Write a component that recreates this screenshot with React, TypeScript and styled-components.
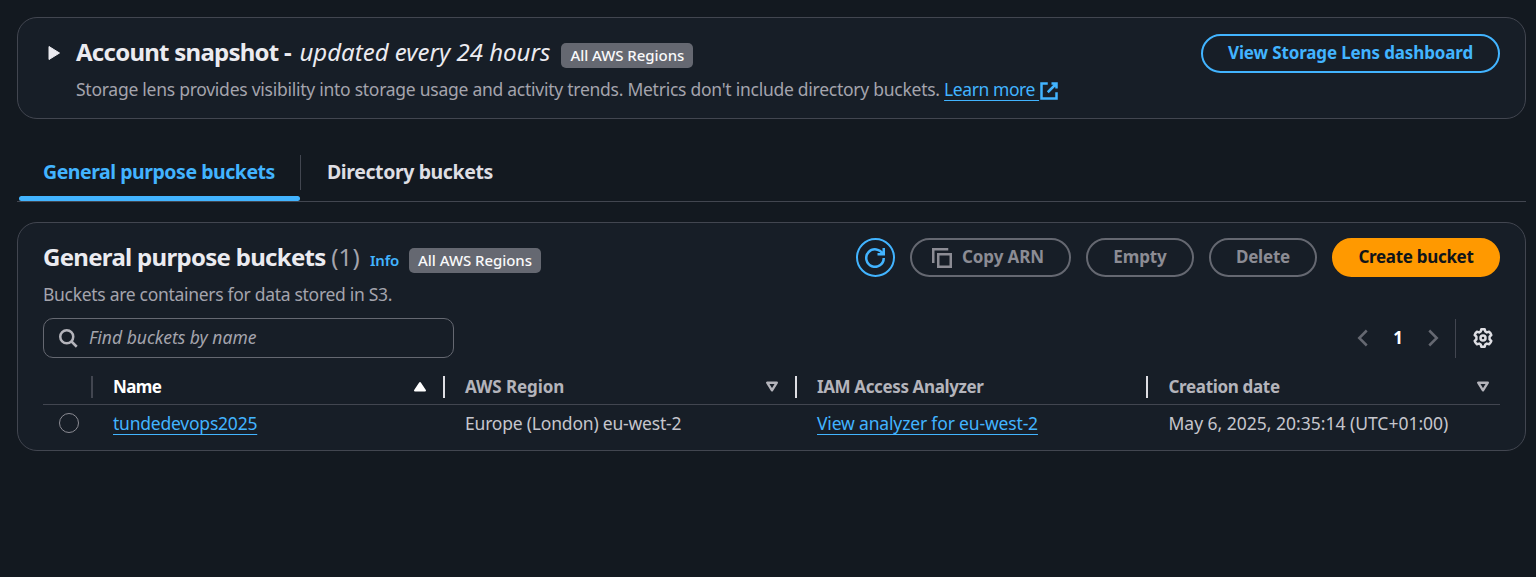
import React from 'react';
import styled, { createGlobalStyle, css } from 'styled-components';

const c = {
  page: '#131920',
  card: '#171e27',
  line: '#424650',
  muted: '#a4a4ad',
  text: '#c6c6cd',
  bright: '#ebebf0',
  blue: '#42b4ff',
  disabled: '#8c8c94',
  control: '#656871',
};

const GlobalStyle = createGlobalStyle`
  * { box-sizing: border-box; }
  body {
    margin: 0;
    background: ${c.page};
    color: ${c.text};
    font-family: "Noto Sans", "Open Sans", sans-serif;
    font-size: 17.5px;
    line-height: 25px;
  }
  h2, p { margin: 0; }
`;

const Page = styled.main`
  display: flex;
  flex-direction: column;
  min-height: 577px;
  padding: 17px 10px 0 17px;
`;

const Card = styled.section`
  border: 1px solid ${c.line};
  border-radius: 20px;
  background: ${c.card};
`;

const Snapshot = styled(Card)`
  display: flex;
  align-items: flex-start;
  height: 102px;
  padding: 16px 25px 0 29px;
`;

const Expander = styled.span`
  display: flex;
  width: 29px;
  padding-top: 11px;
`;

const SnapshotBody = styled.div`
  flex: 1;
  white-space: nowrap;
`;

const TitleRow = styled.div<{ $gap: number }>`
  display: flex;
  align-items: center;
  gap: ${p => p.$gap}px;
  height: 38px;
`;

const Heading = styled.h2<{ $track: number; $lift?: number }>`
  padding-bottom: ${p => p.$lift ?? 0}px;
  color: ${c.bright};
  font-size: 24px;
  font-weight: 700;
  line-height: 32px;
  letter-spacing: ${p => p.$track}px;
  white-space: pre;

  em {
    margin-left: 3px;
    font-weight: 400;
    letter-spacing: 0;
  }
`;

const Counter = styled.span`
  color: ${c.muted};
  font-weight: 400;
  letter-spacing: 0.2px;
`;

const Badge = styled.span<{ $top: number }>`
  height: 25px;
  margin-top: ${p => p.$top}px;
  padding: 0 9px;
  border-radius: 5px;
  background: ${c.control};
  color: #f9f9fa;
  font-size: 15px;
  font-weight: 500;
  line-height: 25px;
  letter-spacing: -0.05px;
  white-space: nowrap;
`;

const Description = styled.p<{ $top: number; $track: number }>`
  padding-top: ${p => p.$top}px;
  color: ${c.muted};
  letter-spacing: ${p => p.$track}px;
`;

const Link = styled.a<{ $track?: number }>`
  color: ${c.blue};
  letter-spacing: ${p => p.$track ?? 0}px;
  text-decoration: underline;
  text-decoration-thickness: 1px;
  text-underline-offset: 4px;
  text-decoration-skip-ink: none;
`;

const Button = styled.button<{ $tone: 'normal' | 'disabled' | 'primary'; $width: number; $track?: number }>`
  display: flex;
  align-items: center;
  justify-content: center;
  gap: 10px;
  width: ${p => p.$width}px;
  height: 39px;
  padding: 0 0 2px;
  border: 2px solid;
  border-radius: 20px;
  background: transparent;
  font: inherit;
  font-size: 17px;
  font-weight: 700;
  letter-spacing: ${p => p.$track ?? 0}px;
  white-space: nowrap;
  ${p => p.$tone === 'normal' && css`border-color: ${c.blue}; color: ${c.blue};`}
  ${p => p.$tone === 'disabled' && css`border-color: ${c.control}; color: ${c.disabled};`}
  ${p => p.$tone === 'primary' && css`border-color: #ff9900; background: #ff9900; color: #0f141a;`}
`;

const IconButton = styled(Button)`
  padding: 0 1px 0 0;
`;

const CopyButton = styled(Button)`
  padding-right: 5px;

  svg { margin-top: 2px; }
`;

const Tabs = styled.nav`
  display: flex;
  height: 47px;
  margin: 36px 0 20px;
  border-bottom: 1px solid ${c.line};
`;

const Tab = styled.a<{ $active?: boolean }>`
  display: flex;
  flex-direction: column;
  justify-content: space-between;
  color: ${p => (p.$active ? c.blue : '#dedee3')};
  font-size: 19.5px;
  font-weight: 700;
  letter-spacing: ${p => (p.$active ? -0.47 : -0.4)}px;
`;

const TabLabel = styled.span<{ $divided?: boolean }>`
  height: 35px;
  padding: 0 25px 0 26px;
  border-right: ${p => (p.$divided ? `1px solid ${c.line}` : '0')};
  line-height: 34px;
`;

const TabMarker = styled.span`
  height: 5px;
  margin: 0 1px 0 2px;
  border-radius: 3px;
  background: ${c.blue};
`;

const Buckets = styled(Card)`
  display: flex;
  flex-direction: column;
  height: 229px;
  padding: 15px 25px 0;
`;

const Header = styled.header`
  display: flex;
  justify-content: space-between;
  height: 80px;
`;

const Actions = styled.div`
  display: flex;
  gap: 15px;
  height: 39px;
`;

const Info = styled.a`
  margin-top: 7px;
  color: ${c.blue};
  font-size: 15px;
  font-weight: 600;
  letter-spacing: -0.2px;
`;

const Tools = styled.div`
  display: flex;
  align-items: center;
  justify-content: space-between;
`;

const Search = styled.label`
  display: flex;
  align-items: center;
  gap: 11px;
  width: 411px;
  height: 40px;
  padding-left: 14px;
  border: 1px solid ${c.control};
  border-radius: 10px;
  color: #b4b4bb;
`;

const Placeholder = styled.span`
  padding-bottom: 1px;
  color: ${c.muted};
  font-style: italic;
`;

const Pager = styled.div`
  display: flex;
  align-items: center;
  color: ${c.control};
`;

const PageNumber = styled.span`
  width: 50px;
  padding-bottom: 1px;
  color: #fff;
  font-size: 17px;
  font-weight: 700;
  text-align: center;
`;

const Preferences = styled.span`
  display: flex;
  align-items: center;
  height: 39px;
  margin-left: 12px;
  padding: 0 7px 0 17px;
  border-left: 1px solid ${c.line};
  color: #dedee3;
`;

const Row = styled.div`
  display: grid;
  grid-template-columns: 50px 352px 352px 351px 1fr;
  align-items: center;
  height: 37px;
`;

const HeadRow = styled(Row)`
  height: 29px;
  margin-top: 18px;
  padding-bottom: 6px;
  border-bottom: 1px solid ${c.line};
`;

const HeadCell = styled.div<{ $rule?: 'soft' | 'strong'; $active?: boolean; $track?: number }>`
  display: flex;
  align-items: center;
  justify-content: space-between;
  height: 22px;
  padding: 0 16px 0 20px;
  border-right: ${p => (p.$rule === 'strong' ? '2px solid #dedee3' : p.$rule === 'soft' ? `2px solid ${c.line}` : '0')};
  color: ${p => (p.$active ? '#fff' : '#b4b4bb')};
  font-size: 17px;
  font-weight: 700;
  line-height: 22px;
  letter-spacing: ${p => p.$track ?? 0}px;

  span { padding-bottom: 1px; }
`;

const LastHeadCell = styled(HeadCell)`
  padding: 0 10px 0 20.5px;
`;

const Cell = styled.div<{ $track?: number; $inset?: number }>`
  padding-left: ${p => p.$inset ?? 20}px;
  letter-spacing: ${p => p.$track ?? 0}px;
  white-space: nowrap;
`;

const Radio = styled.span`
  width: 20px;
  height: 20px;
  margin: 0 0 2px 16px;
  border: 1px solid #8c8c94;
  border-radius: 50%;
`;

const Glyph = styled.svg<{ $drop?: number; $weight?: number }>`
  flex: none;
  fill: none;
  stroke: currentColor;
  stroke-width: ${p => p.$weight ?? 2};
  vertical-align: ${p => p.$drop ?? 0}px;
`;

const ExternalIcon = () => (
  <Glyph width="20" height="20" viewBox="0 0 16 16" $drop={-5}>
    <path d="M10 2h4v4M7 9l7-7M14 9v5H2V2h5" />
  </Glyph>
);

const RefreshIcon = () => (
  <Glyph width="20" height="20" viewBox="0 0 16 16">
    <path d="M10 5h5V0M15 8a7 7 0 1 1-.7-3" />
  </Glyph>
);

const CopyIcon = () => (
  <Glyph width="20" height="20" viewBox="0 0 16 16">
    <path d="M15 5H5v10h10zM13 1H1v11" />
  </Glyph>
);

const SearchIcon = () => (
  <Glyph width="20" height="20" viewBox="0 0 16 16">
    <circle cx="7" cy="7" r="5.2" />
    <path d="m15 15-4.2-4.2" />
  </Glyph>
);

const ChevronIcon = ({ right }: { right?: boolean }) => (
  <Glyph width="20" height="20" viewBox="0 0 16 16">
    <path d={right ? 'm5 2 6 6-6 6' : 'm11 2-6 6 6 6'} />
  </Glyph>
);

const GearIcon = () => (
  <Glyph width="20" height="20" viewBox="0 0 20 20" strokeLinejoin="round" $weight={2.5}>
    <path d="M8.300 1.300h3.400l.6 2.200 1.500.9 2.300-.6q1.700 1.300 2.200 3.200l-1.700 1.600v2.800l1.700 1.600q-.5 1.900-2.200 3.200l-2.300-.6-1.500.9-.6 2.200H8.300l-.6-2.200-1.500-.9-2.300.6q-1.700-1.300-2.200-3.200l1.700-1.600V8.600L1.700 7q.5-1.900 2.200-3.200l2.300.6 1.500-.9z" />
    <circle cx="10" cy="10" r="2.500" />
  </Glyph>
);

const SortAscIcon = () => (
  <Glyph width="14" height="12" viewBox="0 0 14 12">
    <path d="M7 2 2 9.500h10z" fill="currentColor" strokeLinejoin="round" />
  </Glyph>
);

const SortIcon = () => (
  <Glyph width="14" height="12" viewBox="0 0 14 12" $weight={2.4}>
    <path d="M2.200 1.700h9.600L7 9.300z" strokeLinejoin="round" />
  </Glyph>
);

export default function App() {
  return (
    <>
      <GlobalStyle />
      <Page>
        <Snapshot>
          <Expander>
            <svg width="14" height="16" viewBox="0 0 14 16">
              <path d="M2 1.500v13L12.500 8z" fill={c.bright} stroke={c.bright} strokeLinejoin="round" />
            </svg>
          </Expander>
          <SnapshotBody>
            <TitleRow $gap={11}>
              <Heading $track={-0.75} $lift={2}>Account snapshot - <em>updated every 24 hours</em></Heading>
              <Badge $top={5}>All AWS Regions</Badge>
            </TitleRow>
            <Description $top={5} $track={-0.26}>
              Storage lens provides visibility into storage usage and activity trends. Metrics don't include directory buckets.{' '}
              <Link $track={-0.43}>Learn more <ExternalIcon /></Link>
            </Description>
          </SnapshotBody>
          <Button $tone="normal" $width={299} $track={-0.14}>View Storage Lens dashboard</Button>
        </Snapshot>

        <Tabs>
          <Tab $active>
            <TabLabel $divided>General purpose buckets</TabLabel>
            <TabMarker />
          </Tab>
          <Tab>
            <TabLabel>Directory buckets</TabLabel>
          </Tab>
        </Tabs>

        <Buckets>
          <Header>
            <div>
              <TitleRow $gap={10}>
                <Heading $track={-0.7}>General purpose buckets <Counter>(1)</Counter></Heading>
                <Info>Info</Info>
                <Badge $top={7}>All AWS Regions</Badge>
              </TitleRow>
              <Description $top={6} $track={-0.3}>Buckets are containers for data stored in S3.</Description>
            </div>
            <Actions>
              <IconButton $tone="normal" $width={39} aria-label="Refresh"><RefreshIcon /></IconButton>
              <CopyButton $tone="disabled" $width={161} $track={-0.1}><CopyIcon />Copy ARN</CopyButton>
              <Button $tone="disabled" $width={108} $track={-0.1}>Empty</Button>
              <Button $tone="disabled" $width={108} $track={-0.2}>Delete</Button>
              <Button $tone="primary" $width={168} $track={-0.31}>Create bucket</Button>
            </Actions>
          </Header>

          <Tools>
            <Search>
              <SearchIcon />
              <Placeholder>Find buckets by name</Placeholder>
            </Search>
            <Pager>
              <ChevronIcon />
              <PageNumber>1</PageNumber>
              <ChevronIcon right />
              <Preferences><GearIcon /></Preferences>
            </Pager>
          </Tools>

          <HeadRow>
            <HeadCell $rule="soft" />
            <HeadCell $rule="strong" $active $track={-0.6}><span>Name</span><SortAscIcon /></HeadCell>
            <HeadCell $rule="strong" $track={-0.1}><span>AWS Region</span><SortIcon /></HeadCell>
            <HeadCell $rule="strong" $track={-0.38}><span>IAM Access Analyzer</span></HeadCell>
            <LastHeadCell $track={-0.33}><span>Creation date</span><SortIcon /></LastHeadCell>
          </HeadRow>
          <Row>
            <Radio />
            <Cell><Link $track={-0.22}>tundedevops2025</Link></Cell>
            <Cell $track={-0.2}>Europe (London) eu-west-2</Cell>
            <Cell><Link $track={-0.16}>View analyzer for eu-west-2</Link></Cell>
            <Cell $inset={20.5} $track={-0.01}>May 6, 2025, 20:35:14 (UTC+01:00)</Cell>
          </Row>
        </Buckets>
      </Page>
    </>
  );
}
